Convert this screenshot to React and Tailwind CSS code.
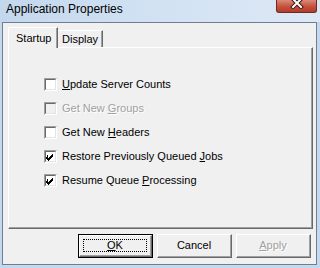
import React from "react";

const F = { fontFamily: '"Liberation Sans", Arial, sans-serif' };

function Check({ checked, disabled }) {
  return (
    <div className="w-[13px] h-[13px] border-t border-l border-[#a0a0a0] border-r border-b border-r-white border-b-white shrink-0">
      <div className={`w-[11px] h-[11px] border-t border-l border-[#696969] border-r border-b border-r-[#e3e3e3] border-b-[#e3e3e3] ${disabled ? "bg-[#f0f0f0]" : "bg-white"} flex items-center justify-center`}>
        {checked && (
          <svg width="9" height="9" viewBox="0 0 9 9" shapeRendering="crispEdges">
            <path d="M1 3h1v3h1v-1h1v-1h1v-1h1v-1h1v3h-1v1h-1v1h-1v1h-1v1h-1v-1h-1v-1h-1z" fill="#000" />
          </svg>
        )}
      </div>
    </div>
  );
}

function Row({ checked, disabled, children }) {
  return (
    <div className="flex items-center h-[24px]">
      <Check checked={checked} disabled={disabled} />
      <span
        className={`ml-[5px] text-[11px] leading-[13px] ${disabled ? "text-[#a0a0a0] [text-shadow:1px_1px_0_#fff]" : "text-black"}`}
      >
        {children}
      </span>
    </div>
  );
}

function Btn({ children, def, disabled }) {
  return (
    <div className={`w-[75px] h-[24px] ${def ? "border border-[#000]" : ""}`}>
      <div className="w-full h-full border-t border-l border-white border-r border-b border-r-[#696969] border-b-[#696969]">
        <div className="w-full h-full border-r border-b border-r-[#a0a0a0] border-b-[#a0a0a0] bg-[#f0f0f0] flex items-center justify-center relative">
          {def && (
            <div className="absolute inset-[3px] border border-dotted border-black" />
          )}
          <span
            className={`text-[11px] leading-[13px] ${disabled ? "text-[#a0a0a0] [text-shadow:1px_1px_0_#fff]" : "text-black"}`}
          >
            {children}
          </span>
        </div>
      </div>
    </div>
  );
}

export default function App() {
  return (
    <div className="w-[320px] h-[268px] bg-[#c4d8ee] flex flex-col overflow-hidden relative" style={F}>
      {/* Title bar */}
      <div className="h-[22px] shrink-0 bg-gradient-to-r from-[#c3d7ed] via-[#d2e2f3] to-[#dde8f5] flex items-start relative">
        <span className="ml-[6px] mt-[2px] text-[12px] leading-[15px] text-black">
          Application Properties
        </span>
        <div className="absolute left-[276px] top-0 w-[41px] h-[13px] rounded-b-[3px] border border-t-0 border-[#6b2a22] bg-gradient-to-b from-[#d88a78] via-[#c65440] to-[#b33a28] flex items-start justify-center overflow-hidden">
          <svg width="14" height="12" viewBox="0 0 14 12" className="-mt-[3px]">
            <path d="M3 2 L11 10 M11 2 L3 10" stroke="#3b1a16" strokeWidth="4" strokeLinecap="square" />
            <path d="M3 2 L11 10 M11 2 L3 10" stroke="#fff" strokeWidth="2" strokeLinecap="square" />
          </svg>
        </div>
      </div>

      {/* Client */}
      <div className="ml-[2px] mr-[3px] mb-[3px] flex-1 border border-[#6f7f92] bg-[#f0f0f0] flex flex-col">
        {/* tabs */}
        <div className="ml-[5px] mt-[4px] h-[20px] flex items-end relative z-10">
          <div className="w-[50px] h-[21px] -mb-[1px] bg-[#f0f0f0] border-t border-l border-white border-r border-r-[#696969] flex items-start">
            <div className="w-full h-full border-r border-[#a0a0a0] pl-[7px] pt-[4px] text-[11px] leading-[13px] text-black">
              Startup
            </div>
          </div>
          <div className="w-[45px] h-[17px] border-t border-white border-r border-r-[#696969]">
            <div className="w-full h-full border-r border-[#a0a0a0] pl-[4px] pt-[2px] text-[11px] leading-[13px] text-black">
              Display
            </div>
          </div>
        </div>
        {/* panel */}
        <div className="ml-[5px] w-[305px] h-[182px] border-t border-l border-white border-r border-b border-r-[#696969] border-b-[#696969]">
          <div className="w-full h-full border-r border-b border-r-[#a0a0a0] border-b-[#a0a0a0] pl-[35px] pt-[24px] flex flex-col relative">
            <Row><u>U</u>pdate Server Counts</Row>
            <Row disabled>Get New <u>G</u>roups</Row>
            <Row>Get New <u>H</u>eaders</Row>
            <Row checked>Restore Previously Queued <u>J</u>obs</Row>
            <Row checked>Resume Queue <u>P</u>rocessing</Row>
          </div>
        </div>
        {/* buttons */}
        <div className="ml-[75px] mt-[5px] flex gap-[4px]">
          <Btn def><u>O</u>K</Btn>
          <Btn>Cancel</Btn>
          <Btn disabled><u>A</u>pply</Btn>
        </div>
      </div>
    </div>
  );
}
